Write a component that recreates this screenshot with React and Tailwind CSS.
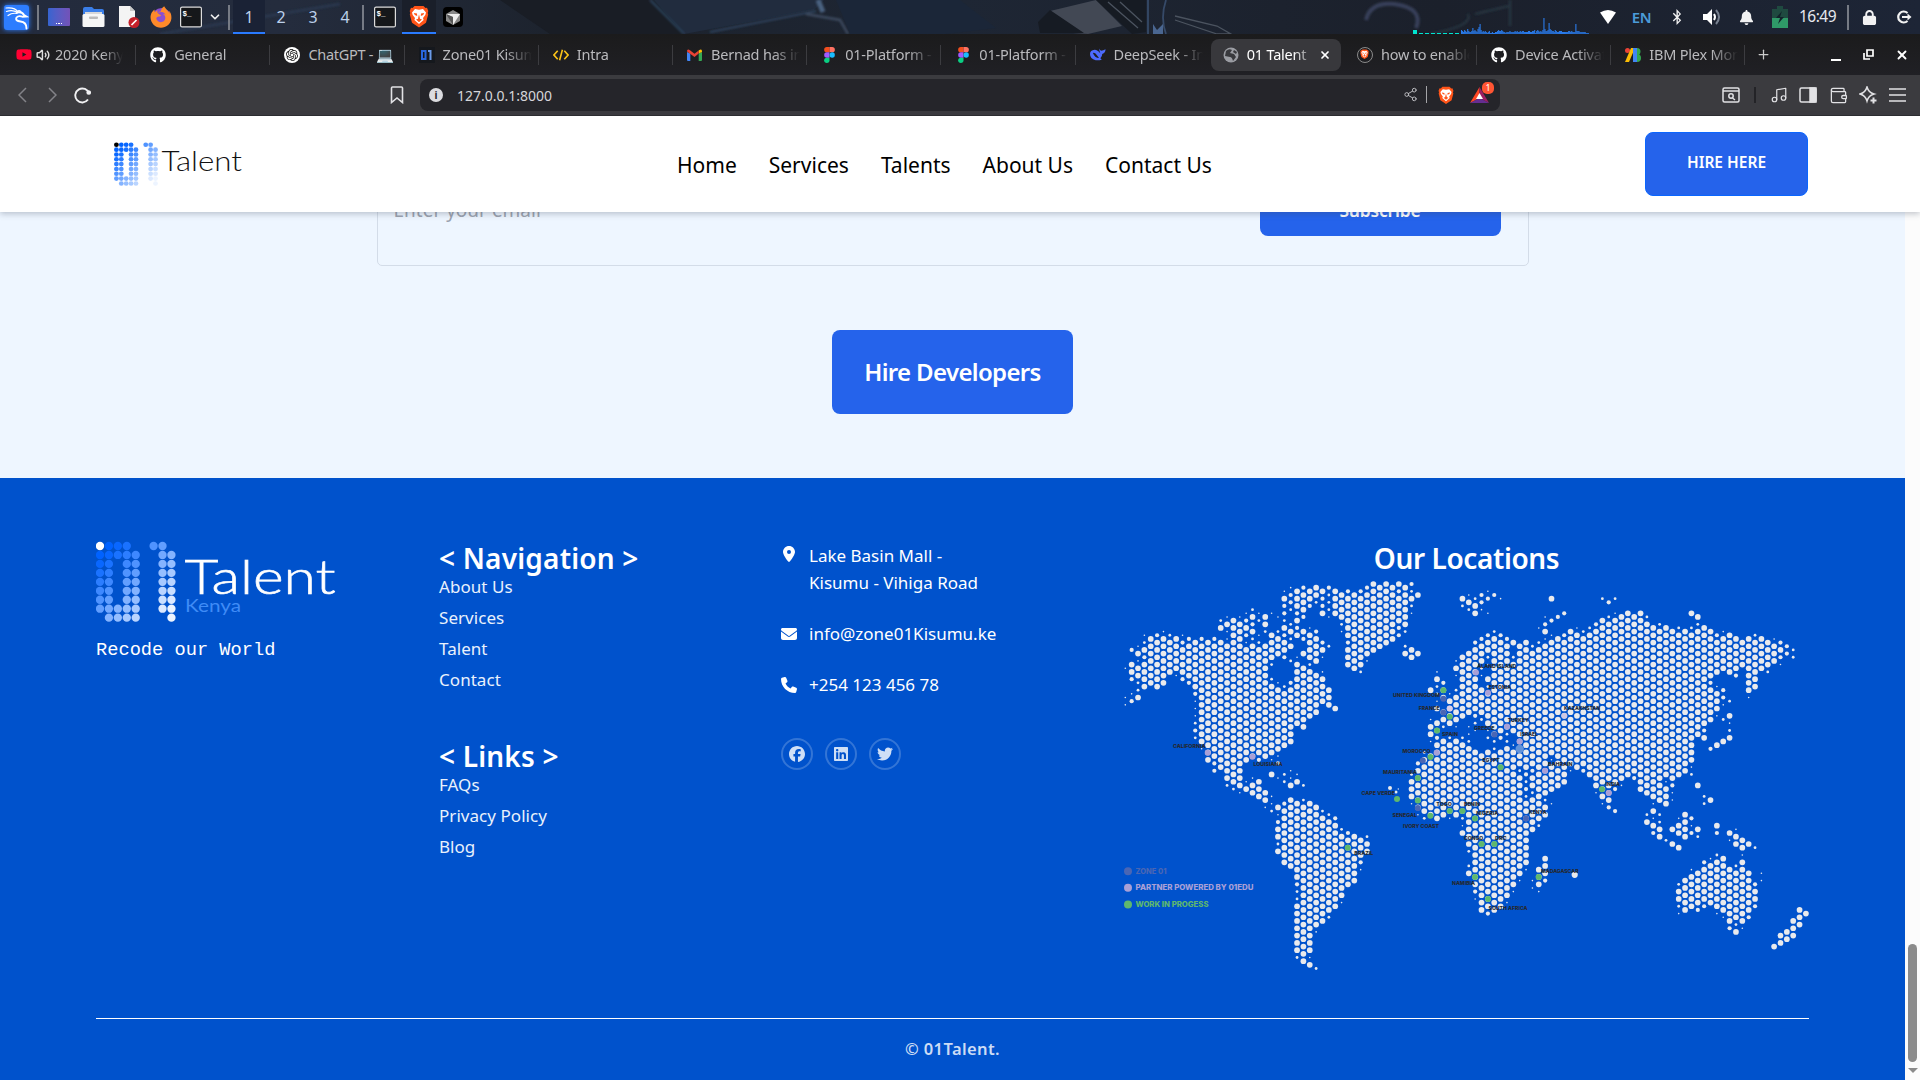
import React from "react";
import { FaGithub, FaYoutube, FaLocationDot, FaEnvelope, FaPhone, FaFacebook, FaLinkedin, FaTwitter, FaLock, FaBell, FaBluetoothB, FaFirefoxBrowser } from "react-icons/fa6";
import { SiOpenai } from "react-icons/si";
import { Volume2, ChevronDown, Share2, Music, Wallet, X, Plus } from "lucide-react";

/* ---------- Dotted world map ---------- */
// One entry per column: "a-b" is a run of full dots, a suffix m/s/t marks smaller dots.
const COLUMNS = [
  "325t 413t 435t",
  "270m 314 336 358m 402t 424m",
  "259t 281 303t 325 347 369s 391s 413",
  "226t 248s 270 292m 314-380",
  "237-369",
  "226m 248-380",
  "215t 237-369",
  "226s 248-336",
  "237-325 347t",
  "226t 248m 270-336 358m",
  "237m 259-347 369m",
  "248-380 402m 424t 446t 468t 490s 512m 534s",
  "237m 259-545 567t",
  "248-600",
  "237m 259-589 611m 633m",
  "182s 204 248-622",
  "171t 193 215t 237t 259-655 677s",
  "182-666 688s",
  "171t 193-677 699t",
  "160t 182m 204 226m 248t 270-600 666t 688",
  "149s 171 193m 215 237s 259-589 655t 677 699",
  "160t 182s 226t 248s 270-578 600m 666 688 710",
  "171 193 215s 259-589 699 721 742t",
  "160t 226-292 314s 358s 380-578 600t 644 710t 732t 754s",
  "171t 215s 237-281 369t 391-567 589t 611m 655t 743 765t 787m 808 830 852s 874",
  "94t 116 138m 160m 182s 204 226m 248 270 292m 380s 402-556 644s 666s 732m 754-908",
  "83t 105m 127m 149s 193s 215 237s 259 303s 369m 391-545 633t 655t 677 721-919",
  "94-138 160m 182 204m 226 292t 314-490 644t 666 732-951 973m 995s 1017s 1039-1171 1193s",
  "83m 105-149 171m 215 237m 281 325-501 677s 721s 743-1205",
  "94 116 138m 204t 226-292 314s 336-468 732-1171 1193t 1215",
  "83 105 127s 215m 237-303 347-457 743-1094 1116t 1226s",
  "94 116m 138m 160 248m 270 292t 336t 358-424 754s 775-1083",
  "83m 105s 127s 149s 171t 259s 391-435 765s 787-1050 1072s",
  "94-160 446 775m 797-1039",
  "105-171 193s 215t 808s 830-1006 1028t",
  "94m 116-226 248m 270-314 819m 841-973",
  "105-325 830-962",
  "94m 116-314 336s 841-885 907m 929t",
  "83m 105-281 303t 830s 852 874",
  "72-270",
  "83-259",
  "72-248",
  "83-237",
  "72 94m 116-182 204m 226m",
  "83-193 215s 259s 281",
  "72m 94s 116 138s 160t 270 292 644s 666 688 710 732t",
  "105 281 611m 633-743 765t",
  "578s 600-754 775s",
  "391 479t 501 523 545t 589-765",
  "336t 358 380s 402s 424t 446 490-512 534m 556-775",
  "369m 391-413 457-479 501s 545-765",
  "402t 424-490 534s 556-753 775t",
  "303t 325 347t 391s 413-479 501t 545-765",
  "116 138s 292-468 534s 556-753 775s 797t 819",
  "105t 127 149s 281-457 501t 523t 545s 567-852 874s 918s 940",
  "116s 138 160 248m 270-446 468m 490s 512t 578-973 995m 1017t",
  "105m 127m 149t 237m 259-303 325s 347t 391-457 479s 589-1050",
  "94t 116m 160t 226m 248 270 292s 314t 358 380s 402-490 512t 534s 578-1039 1061m",
  "105m 215s 237-523 545s 567s 589-1050",
  "116t 226m 248-512 534m 578-1039",
  "237m 259-501 523s 545s 567-1006 1028t",
  "248 292s 314-512 556t 578-973 995t",
  "259-567 589-611 633s 655-940 962t",
  "248-622 644m 666s 688m 710s 732-907 929t",
  "259s 281-611 633m 655-677 699s 721-808 962t 984t",
  "204t 248s 270-775 797s 929-973 995t",
  "171t 193m 215 237t 259-699 721s 743-765 896-940 962m",
  "116 182m 226t 248-578 600t 622-687 732t",
  "171m 237-677",
  "160m 226m 248-666",
  "215-611 633t",
  "204t 226-622",
  "215s 237-611 633m",
  "204s 226-644",
  "193m 215-677 699t",
  "116s 182-710 732t",
  "127m 171s 193-721 743m",
  "116s 160t 182-666 688m 753m",
  "171-655 677t",
  "160-644",
  "171-633 655m",
  "160-688",
  "171s 193-699 765s 787",
  "204-709 731t 753 775t 797 819m",
  "193s 215-721 765s 787s 809 830",
  "204-643 665t 687-731 841s",
  "215-655 677m 699t 721t 808 852",
  "204s 226-643 775t 797 819 863 973s 995 1017 1039s 1061t",
  "215-633 765-830 962-1050",
  "160 204s 226-600 622t 644s 775m 797t 819m 929t 951-1039",
  "171 193s 215-523 677 808 830s 940-1028 1050m",
  "204-490 512m 534 709s 731s 907m 929-1017 1039m",
  "215-347 369m 391-479 567m 721 896t 918-1028",
  "226m 248-336 380t 402-446 468t 556 797 819m 885s 907-1039 1061t",
  "215t 237-325 391m 413m 435t 479s 545 896-1050 1072t",
  "226-336 424s 468 490t 512s 534 819 841t 929-1083 1105m",
  "237-325 347m 808t 830 852 918s 940-1072 1094s 1116",
  "248-314 841 863 885t 907-1083 1105t",
  "237-391 413t 852 940-1050 1072m",
  "226s 248-380 863s 973m 995 1017 1039m",
  "237-325 940t 962t",
  "248-314 336s",
  "237t 259-303 1160",
  "248m 270 292m 314t 1127 1149",
  "259m 281m 1116 1138",
  "270s 292s 1083 1105 1127",
  "1050 1072 1094",
  "1061",
];
const R = { m: 2.1, s: 1.4, t: 0.8 };
const DOTS = COLUMNS.flatMap((col, c) => {
  const x = 1125.3 + 6.361 * c - 1124;
  const parity = c % 2 === 0 ? 1 : 0;
  const snap = (z) => 2 * Math.round(((z - 72) / 10.986 - parity) / 2) + parity;
  return col.split(" ").flatMap((tok) => {
    const size = R[tok.slice(-1)] || 2.85;
    const [a, b] = tok.replace(/[mst]/, "").split("-").map(Number);
    const out = [];
    for (let r = snap(a); r <= snap(b || a); r += 2) out.push([x, 584 + 3.662 * r - 578, size]);
    return out;
  });
});

const GREEN = "#5fb86d", PURPLE = "#a9a0d6", NAVY = "#4a66b4";
const MARKERS = [
  [83.7, 174.7, PURPLE], [128.4, 178.7, PURPLE],
  [352, 94.6, PURPLE], [364, 114.7, PURPLE], [325.7, 130.5, "#d9cfe8"], [383, 148.6, PURPLE], [395.6, 163.6, PURPLE],
  [440.4, 137.7, "#cfc8e4"], [421, 192.7, PURPLE], [312.6, 174.8, PURPLE], [484.7, 215, PURPLE],
  [319.4, 120.7, NAVY], [319.4, 134.4, NAVY], [370.4, 156.4, NAVY], [298.8, 182.6, NAVY], [293.8, 230, NAVY], [402, 240.4, NAVY],
  [319.4, 112.3, GREEN], [325.7, 138.7, GREEN], [313, 152.5, GREEN], [306.5, 179, GREEN], [376.6, 189.3, GREEN],
  [293.8, 200, GREEN], [293.8, 222.4, GREEN], [306.3, 237.7, GREEN], [325.7, 233, GREEN], [338.4, 233, GREEN], [351, 240.4, GREEN],
  [357.6, 266, GREEN], [370.4, 266, GREEN], [351, 299, GREEN], [364, 321, GREEN], [414.6, 299, GREEN], [478, 211.3, GREEN],
  [273, 221, GREEN], [223.7, 269.7, GREEN],
];
// [label, left, baseline, width]
const LABELS = [
  ["CALIFORNIA", 49, 169.8, 32.5], ["LOUISIANA", 129.5, 188, 29], ["ÅLAND ISLAND", 353.3, 90, 39], ["ESTONIA", 364.5, 110.5, 22.5],
  ["UNITED KINGDOM", 269, 118.5, 47], ["FRANCE", 294.7, 131.6, 21], ["KAZAKHSTAN", 440, 132, 36], ["TURKEY", 383.7, 143.5, 21],
  ["GREECE", 350, 151.5, 20.5], ["SPAIN", 318, 157.8, 16], ["ISRAEL", 396.3, 158.4, 17.5], ["MOROCCO", 278.5, 175, 28],
  ["EGYPT", 358.5, 184, 17], ["BAHRAIN", 424, 188, 24.5], ["MAURITANIA", 259, 195.5, 34], ["CAPE VERDE", 237.5, 217, 33.5],
  ["TOGO", 312.3, 228.4, 15.5], ["BENIN", 340, 228, 16], ["SENEGAL", 268.5, 238.8, 24.5], ["NIGERIA", 352.3, 237, 22],
  ["KENYA", 405, 235.5, 17.5], ["IVORY COAST", 279, 250, 36], ["CONGO", 340, 262.3, 19], ["DRC", 371, 262.3, 11.5],
  ["NAMIBIA", 328, 307, 23], ["MADAGASCAR", 417, 294.6, 37.5], ["SOUTH AFRICA", 364.5, 331.5, 39], ["INDIA", 481.5, 208, 14.5], ["BRAZIL", 230.3, 277, 19],
];

function WorldMap() {
  return (
    <svg className="block h-[400px] w-[685px] overflow-visible" viewBox="0 0 685 400">
      <g fill="#e9eaed">
        {DOTS.map(([x, y, r], i) => <circle key={i} cx={x} cy={y} r={r} />)}
        <circle cx="266" cy="210" r="2" /><circle cx="272" cy="214" r="1.5" /><circle cx="274.3" cy="211" r="0.7" />
        <circle cx="450.7" cy="296.8" r="3.1" />
      </g>
      <circle cx="395.7" cy="171" r="4.2" fill="#6293da" />
      {MARKERS.map(([x, y, f], i) => <circle key={i} cx={x} cy={y} r="3" fill={f} />)}
      <g fontFamily="Inter, sans-serif" fontWeight="800" fontSize="4.9" fill="#24282f">
        {LABELS.map(([t, x, y, w]) => <text key={t} x={x} y={y} textLength={w} lengthAdjust="spacingAndGlyphs">{t}</text>)}
      </g>
      <g fontFamily="Inter, sans-serif" fontWeight="800" fontSize="7.4">
        <circle cx="4" cy="293.2" r="4" fill={NAVY} /><text x="11.5" y="295.9" textLength="31" lengthAdjust="spacingAndGlyphs" fill={NAVY}>ZONE 01</text>
        <circle cx="4" cy="309.8" r="4" fill={PURPLE} /><text x="11.5" y="312.2" textLength="118" lengthAdjust="spacingAndGlyphs" fill={PURPLE}>PARTNER POWERED BY 01EDU</text>
        <circle cx="4" cy="326.4" r="4" fill={GREEN} /><text x="11.5" y="329.3" textLength="73" lengthAdjust="spacingAndGlyphs" fill={GREEN}>WORK IN PROGESS</text>
      </g>
    </svg>
  );
}

/* ---------- 01 logo ---------- */
const ROWS = ["####..##.", "#####..##", "##.##..##", "##.##..##", "##.##..##", "##.##..##", "##.##..##", "#####..##", ".####...#"];
const LOGO = ROWS.flatMap((row, r) => [...row].flatMap((ch, c) => (ch === "#" ? [[c, r]] : [])));
function LogoDots({ x, y, dx, dy, rx, ry, first }) {
  return LOGO.map(([c, r]) => {
    const t = Math.min(0.93, Math.max(0, (c + r - 1.5) / 14.5));
    const fill = c + r === 0 ? first : `rgb(${Math.round(255 * t)},${Math.round(98 + 157 * t)},255)`;
    return <ellipse key={`${c}-${r}`} cx={x + c * dx} cy={y + r * dy} rx={rx} ry={ry} fill={fill} />;
  });
}

/* ---------- Desktop panel ---------- */
function Terminal() {
  return (
    <svg width="22" height="22" viewBox="0 0 22 22">
      <rect x="0.6" y="1.1" width="20.8" height="19.8" rx="1.5" fill="#15171a" stroke="#dcdcdc" strokeWidth="1.2" />
      <text x="2.5" y="10" fontFamily="Liberation Mono, monospace" fontWeight="700" fontSize="7.5" fill="#fff">$_</text>
    </svg>
  );
}
function Dragon() {
  return (
    <svg width="24" height="25" viewBox="0 0 24 25" fill="none" stroke="#fff" strokeLinecap="round">
      <path d="M1 3q9-1 12 4M1.500 6.500q6-2 11 1M3 10.500q4-3 9-2" strokeWidth="1.200" />
      <path d="M12 7.500q5-1 7 2.500l2.500 1.500-4 .2q-4-1.500-6 .8-1.500 3.500 4 4 6 .5 6 7" strokeWidth="1.900" />
      <path d="M13 6q2-1 3 1" strokeWidth="1.500" />
    </svg>
  );
}
function BraveIcon({ size = 20 }) {
  return (
    <svg width={size} height={size * 1.15} viewBox="0 0 20 23">
      <path d="M5.5 1h9l2 2 1.5-.2L19.3 6l-.6 2 .5 1.5-2.2 8.2L10 22.5 3 17.7.8 9.5 1.3 8 .7 6 2 2.8l1.5.2z" fill="#ff5418" />
      <path d="M6 4l4 .8L14 4l3 3.5-.7 2.5-2.3 3 .6 2-4.6 4-4.6-4 .6-2-2.3-3L3 7.500z" fill="#fff" />
      <path d="M4.800 8l3.200.6.2 2.400-2.400-1zM15.200 8l-3.200.6-.2 2.400 2.400-1zM10 9.500l1 4-1 .8-1-.8zM7 14.600l3-1 3 1-3 2.600z" fill="#ff5418" />
    </svg>
  );
}
const GRAPH = [4,3,2,4,3,2,5,3,2,2,3,6,3,4,3,2,5,7,10,4,2,3,2,3,2,1,2,3,1,1,2,1,1,2,2,3,4,3,3,4,3,2,2,1,2,2,2,3,2,2,2,2,3,2,3,2,2,3,2,3,3,2,2,2,2,3,3,2,2,3,3,4,1,3,4,3,2,3,2,4,16,5,3,3,4,11,5,4,3,3,2,4,3,2,2,3,3,3,2,2,2,2,2,2,3,3,2,3,2,2,2,10,3,3,3,2,2,2,2,2,2,1,1,1];
const Sep = () => <div className="h-[25px] w-[2px] shrink-0 bg-[#767b85]" />;
const Cell = ({ w, children, className = "" }) => (
  <div className={"flex h-full shrink-0 items-center justify-center " + w + " " + className}>{children}</div>
);

function Wallpaper() {
  return (
    <svg className="absolute inset-0 h-[34px] w-[1920px]" viewBox="0 0 1920 34">
      <defs>
        <linearGradient id="wp" x1="0" x2="1"><stop offset="0" stopColor="#232b3d" /><stop offset=".15" stopColor="#242c3d" /><stop offset=".3" stopColor="#1c222c" /><stop offset=".5" stopColor="#1e2634" /><stop offset=".75" stopColor="#1b202b" /><stop offset="1" stopColor="#1d2536" /></linearGradient>
        <filter id="soft"><feGaussianBlur stdDeviation="1.2" /></filter>
      </defs>
      <rect width="1920" height="34" fill="url(#wp)" />
      <path d="M500 0h150l36 34H550z" fill="#191d25" />
      <path d="M654 0l30 34 130-24 10-10z" fill="#212c3e" />
      <g filter="url(#soft)" fill="none">
        <path d="M650 0l34 34M710 32l106-21" stroke="#2f435d" strokeWidth="2" />
        <path d="M160 34L340 4" stroke="#2c3950" strokeWidth="2.500" />
        <path d="M818 0l5 12" stroke="#4a6280" strokeWidth="5" />
        <path d="M806 14l34 6 8 14" stroke="#3c4a5e" strokeWidth="2.500" />
        <path d="M1366 20q4-18 28-16 30 4 22 24" stroke="#38415a" strokeWidth="4" />
        <path d="M1430 34q44-8 38-20M1475 14l34-8M1510 0v26" stroke="#26343f" strokeWidth="2.500" />
      </g>
      <path d="M960 0l36 28-50 6H850L836 0z" fill="#1b2638" />
      <path d="M1050 11l46-11 26 26-34 8-46-3z" fill="#424854" />
      <path d="M1038 22l12-12 34 23h-44zM1096 0h50v32l-14 2z" fill="#161b23" />
      <path d="M1108 2l30 26M1120 2l22 20M1175 16l42 10 14 8h-14l-42-14" stroke="#4b535f" strokeWidth="1.300" fill="none" />
      <path d="M1148 0v34M1166 0q-6 18 0 34" stroke="#364a68" strokeWidth="1.800" fill="none" />
      <path d="M1153 24l4 6 6-6v10h-10z" fill="#4a6690" />
      <g fill="#00e5d0"><rect x="1413" y="30" width="4" height="4" />{[0,1,2,3,4,5,6].map((i) => <rect key={i} x={1419 + i * 6} y="33" width="4" height="1" />)}</g>
      <g fill="#2a7bea">{GRAPH.map((h, i) => <rect key={i} x={1461 + i * 1.030} y={34 - h} width="1.100" height={h} />)}</g>
    </svg>
  );
}

function Panel() {
  return (
    <div className="relative h-[34px] overflow-hidden">
      <Wallpaper />
      <div className="relative flex h-full items-center font-['Noto_Sans',sans-serif] text-[16px] text-[#bcd0ea]">
        <Cell w="w-[37px]" className="pr-1"><div className="flex size-[25px] items-center justify-center rounded-[3px] bg-[#2d7dff] shadow-[0_0_5px_#2d7dff]"><Dragon /></div></Cell>
        <Sep />
        <Cell w="w-[40px]"><div className="flex h-[18px] w-[22px] items-end justify-center gap-[1px] rounded-[1px] bg-gradient-to-r from-[#3564d0] to-[#7352b8] pb-[2px]"><i className="h-[1.5px] w-[1.5px] bg-white" /><i className="h-[1.5px] w-[1.5px] bg-white" /><i className="h-[1.5px] w-[1.5px] bg-white" /></div></Cell>
        <Cell w="w-[28px]"><svg width="23" height="22" viewBox="0 0 23 22"><path d="M1 9V3q0-2 2-2h7l2 2h8q2 0 2 2v5z" fill="#3a7ee8" /><path d="M3 6h17v6H3z" fill="#d8d8d8" /><rect x="0.500" y="8" width="22" height="13" rx="1.500" fill="#f6f6f6" /><rect x="7" y="10.500" width="9" height="2.500" rx="1" fill="#bbb" /></svg></Cell>
        <Cell w="w-[42px]"><svg width="23" height="22" viewBox="0 0 23 22"><path d="M2 0h11l5 5v16H2z" fill="#f4f4f4" /><path d="M13 0v5h5z" fill="#c9c9c9" /><circle cx="17" cy="16.500" r="5.500" fill="#c5202a" /><path d="M14.500 19l5-5" stroke="#fff" strokeWidth="1.700" /></svg></Cell>
        <Cell w="w-[24px]"><div className="flex size-[19px] items-center justify-center rounded-full bg-[#8a4fd0]"><FaFirefoxBrowser size={22} color="#ff8a2a" className="shrink-0" /></div></Cell>
        <Cell w="w-[34px]" className="pl-[2px]"><Terminal /></Cell>
        <Cell w="w-[26px]" className="pr-[11px]"><ChevronDown size={14} strokeWidth={3} color="#eee" /></Cell>
        <div className="mr-[3px] -ml-[5px]"><Sep /></div>
        <Cell w="w-[32px]" className="border-b-2 border-[#2a7bff] bg-[#1a2235] pt-[2px]">1</Cell>
        <Cell w="w-[32px]">2</Cell><Cell w="w-[32px]">3</Cell><Cell w="w-[32px]">4</Cell>
        <div className="ml-px"><Sep /></div>
        <Cell w="w-[38px]" className="pl-[4px]"><Terminal /></Cell>
        <Cell w="w-[34px]" className="border-b-2 border-[#2a7bff] bg-[#1a1f2a]"><BraveIcon size={20} /></Cell>
        <Cell w="w-[34px]"><div className="flex size-[20px] items-center justify-center rounded-[4px] bg-black"><svg width="14" height="15" viewBox="0 0 14 15"><path d="M7 0l7 4v7l-7 4-7-4V4z" fill="#888" /><path d="M0 4h14L7 15V7z" fill="#eee" /><path d="M0 4l7 3v8z" fill="#555" /></svg></div></Cell>
        <div className="grow" />
        <Cell w="w-[32px]"><svg width="16" height="14" viewBox="0 0 16 14"><path d="M0 2.500Q8-2.500 16 2.500L8 14z" fill="#fff" /></svg></Cell>
        <Cell w="w-[35px]" className="text-[15px] font-semibold tracking-[-0.3px] text-[#4b9bd8]">EN</Cell>
        <Cell w="w-[35px]"><FaBluetoothB size={16} color="#f2f2f2" /></Cell>
        <Cell w="w-[35px]"><svg width="18" height="16" viewBox="0 0 18 16"><path d="M0 5h4l5-5v16l-5-5H0z" fill="#fff" /><path d="M11 5q2 3 0 6" stroke="#fff" strokeWidth="2" fill="none" /><path d="M13 1q6 7 0 14" stroke="#77808f" strokeWidth="2" fill="none" /></svg></Cell>
        <Cell w="w-[34px]"><FaBell size={15} color="#f2f2f2" /></Cell>
        <Cell w="w-[34px]"><svg width="16" height="22" viewBox="0 0 16 22"><path d="M5 0h6v3h5v10H0V3h5z" fill="#1f4a40" /><path d="M0 12h16v10H0z" fill="#2f9a68" /><path d="M10 5l-6 7h4l-2 6 6-7H8z" fill="#12222a" /></svg></Cell>
        <Cell w="w-[50px]" className="pr-[9px] text-[15.500px] tracking-[-0.5px] text-[#e6e9ef]">16:49</Cell>
        <Sep />
        <Cell w="w-[40px]"><FaLock size={15} color="#f2f2f2" /></Cell>
        <Cell w="w-[31px]" className="pr-[2px]"><svg width="16" height="14" viewBox="0 0 16 14" fill="none" stroke="#f2f2f2" strokeWidth="2.200"><path d="M11.500 3A5.500 5.500 0 1 0 11.500 11M6 7h7" /><path d="M11.500 3.500L15.500 7l-4 3.500z" fill="#f2f2f2" stroke="none" /></svg></Cell>
      </div>
    </div>
  );
}

/* ---------- Browser chrome ---------- */
const Figma = () => (
  <svg width="11" height="16" viewBox="0 0 12 18"><path d="M3 0h3v6H3a3 3 0 0 1 0-6z" fill="#f24e1e" /><path d="M6 0h3a3 3 0 0 1 0 6H6z" fill="#ff7262" /><path d="M3 6h3v6H3a3 3 0 0 1 0-6z" fill="#a259ff" /><circle cx="9" cy="9" r="3" fill="#1abcfe" /><path d="M3 12h3v3a3 3 0 1 1-3-3z" fill="#0acf83" /></svg>
);
const Gmail = () => (
  <svg width="15" height="12" viewBox="0 0 15 12"><path d="M0 3v8q0 1 1 1h2.300V4.500z" fill="#4285f4" /><path d="M15 3v8q0 1-1 1h-2.300V4.500z" fill="#34a853" /><path d="M11.700 4.500V1.500Q15-1 15 2.500V3z" fill="#fbbc04" /><path d="M0 2.500Q0-1 3.300 1.500L7.500 4.700l4.200-3.200v3L7.500 8 0 2.500z" fill="#ea4335" /></svg>
);
const Tiny01 = () => (
  <div className="flex size-[16px] items-center justify-center bg-[#15181d]"><svg width="11" height="10" viewBox="0 0 11 10" fill="none" strokeWidth="2"><path d="M1 0v9h3.500V1H1" stroke="#2866dd" /><path d="M7 1h2.500v9" stroke="#6b9ae8" /></svg></div>
);
const TABS = [
  { t: "2020 Keny", icon: <FaYoutube size={17} color="#ff0033" />, audio: true },
  { t: "General", icon: <FaGithub size={16} color="#fff" /> },
  { t: "ChatGPT - 💻", solid: true, icon: <div className="flex size-[16px] items-center justify-center rounded-full bg-white"><SiOpenai size={12} color="#111" /></div> },
  { t: "Zone01 Kisumu", icon: <Tiny01 /> },
  { t: "Intra", icon: <svg width="17" height="12" viewBox="0 0 17 12" fill="none" stroke="#fcc419" strokeWidth="1.700"><path d="M5 1.500L1 6l4 4.500M12 1.500L16 6l-4 4.500M10 .5l-3 11" /></svg> },
  { t: "Bernad has in", icon: <Gmail /> },
  { t: "01-Platform -", icon: <Figma /> },
  { t: "01-Platform -", icon: <Figma /> },
  { t: "DeepSeek - In", icon: <svg width="17" height="13" viewBox="0 0 17 13"><path d="M0 6Q0 2 5 1.500q3 0 6 4Q10 2 9.500 0q1 2 2.500 2.500 2 0 4.500-1.500Q16.500 5 13 6q0 3-2 4.500l1.500 1.500Q9 13 6 12.500 0 11 0 6z" fill="#4d6bfe" /><path d="M3 5q2-1.500 5 3l1.500 2Q6 11 3 5z" fill="#1e1f24" /></svg> },
  { t: "01 Talent", active: true, icon: <svg width="16" height="16" viewBox="0 0 16 16"><circle cx="8" cy="8" r="7.500" fill="#9b9da3" /><path d="M3 4q3-3 6-1l-2 3 4 1 2 3-3 4q-1-4-3-4L2 9M11 3l3 2-1 2-3-2z" fill="#38393d" /></svg> },
  { t: "how to enable", icon: <div className="flex size-[16px] items-center justify-center rounded-full border border-[#8a8a8a]"><BraveIcon size={9} /></div> },
  { t: "Device Activat", icon: <FaGithub size={16} color="#fff" /> },
  { t: "IBM Plex Mono", icon: <svg width="16" height="14" viewBox="0 0 16 14"><circle cx="2.500" cy="2.500" r="2.500" fill="#ea4335" /><path d="M6 0h4L4 14H0z" fill="#fbbc04" /><path d="M8 0h4v14H8z" fill="#4285f4" /><path d="M12 0a3.500 3.500 0 0 1 0 7zM12 6a4 4 0 0 1 0 8z" fill="#34a853" /></svg> },
];

function TabStrip() {
  return (
    <div className="flex h-[41px] items-center bg-gradient-to-b from-[#1b1b1c] to-[#202025] font-['Noto_Sans',sans-serif] text-[14.500px] text-[#bababd]">
      <div className="w-[2px]" />
      {TABS.map((tab, i) =>
        tab.active ? (
          <div key={i} className="flex h-[32px] w-[134.200px] shrink-0 items-center pl-[2px]">
            <div className="flex h-full w-[130px] items-center rounded-lg bg-[#38383c] pl-[12px] text-white">
              <div className="flex w-[16px] justify-center">{tab.icon}</div>
              <div className="ml-2 w-[62px] overflow-hidden whitespace-nowrap tracking-[-0.2px] [mask-image:linear-gradient(to_right,black_75%,#0005)]">{tab.t}</div>
              <X size={12} strokeWidth={3.5} className="ml-[10px]" />
            </div>
          </div>
        ) : (
          <div key={i} className={"flex h-[20px] w-[134.200px] shrink-0 items-center border-l pl-[14px] " + (i === 0 || i === 10 ? "border-transparent -ml-px pr-px" : "border-[#3c3c40]")}>
            <div className="flex w-[16px] shrink-0 justify-center">{tab.icon}</div>
            {tab.audio && <Volume2 size={14} strokeWidth={2.500} color="#ddd" className="ml-[4px] shrink-0" />}
            <div className={"overflow-hidden whitespace-nowrap tracking-[-0.2px] " + (tab.solid ? "tracking-[-0.3px] " : "[mask-image:linear-gradient(to_right,black_70%,transparent)] ") + (tab.audio ? "ml-[5px] w-[68px]" : "ml-2 w-[89px]")}>{tab.t}</div>
          </div>
        )
      )}
      <div className="h-[20px] w-px bg-[#3c3c40]" />
      <Plus size={15} className="ml-[11px]" color="#ccc" />
      <div className="ml-auto flex items-center pr-[11px]">
        <div className="mt-[10px] h-[2px] w-[10px] bg-white" />
        <svg width="11" height="11" viewBox="0 0 11 11" className="ml-[22px]" fill="none" stroke="#fff" strokeWidth="1.700"><path d="M4 1h6v6H4zM1 4v6h6" /></svg>
        <X size={14} strokeWidth={3.200} color="#fff" className="ml-[21px]" />
      </div>
    </div>
  );
}

function Toolbar() {
  return (
    <div className="flex h-[41px] items-center border-b border-[#2c2c2f] bg-[#3b3b3f] font-['Noto_Sans',sans-serif] text-[#d6d6d9]">
      <Cell w="w-[44px]"><svg width="9" height="16" viewBox="0 0 9 16" fill="none" stroke="#838388" strokeWidth="1.500"><path d="M8 1L1 8l7 7" /></svg></Cell>
      <Cell w="w-[16px]"><svg width="9" height="16" viewBox="0 0 9 16" fill="none" stroke="#838388" strokeWidth="1.500"><path d="M1 1l7 7-7 7" /></svg></Cell>
      <Cell w="w-[44px]"><svg width="17" height="17" viewBox="0 0 17 17" fill="none" stroke="#f0f0f2" strokeWidth="1.900"><path d="M15 6.500A7 7 0 1 0 14 12.500" /><circle cx="14.700" cy="5.500" r="1.400" fill="#f0f0f2" /></svg></Cell>
      <div className="w-[286px]" />
      <svg width="14" height="18" viewBox="0 0 14 18" fill="none" stroke="#e2e2e5" strokeWidth="1.600"><path d="M2.500 1h9q1 0 1 1v14.500L7 12l-5.500 4.500V2q0-1 1-1z" /></svg>
      <div className="ml-[16px] flex h-[32px] w-[1080px] items-center rounded-lg bg-[#25252a] pl-[9px] text-[14px]">
        <div className="flex size-[14px] items-center justify-center rounded-full bg-[#dcdce0] text-[10px] font-bold text-[#25252a]">i</div>
        <span className="ml-[14px]">127.0.0.1:8000</span>
        <div className="ml-auto flex items-center">
          <Share2 size={15} strokeWidth={1.600} color="#b8b8bc" />
          <div className="ml-[8px] h-[17px] w-px bg-[#a5a5a8]" />
          <div className="ml-[11px]"><BraveIcon size={16} /></div>
          <div className="relative mr-[11px] ml-[16px]">
            <svg width="19" height="16" viewBox="0 0 19 16"><path d="M9.500 0L0 16l9.500-5z" fill="#ff4724" /><path d="M9.500 0L19 16l-9.500-5z" fill="#9e1f63" /><path d="M0 16h19l-9.500-5z" fill="#662d91" /><path d="M9.500 6l3.500 6H6z" fill="#fff" /></svg>
            <span className="absolute -top-[5px] left-[12px] flex size-[12px] items-center justify-center rounded-[5px] bg-[#ff5533] text-[9px] text-white">1</span>
          </div>
        </div>
      </div>
      <div className="ml-auto flex items-center text-[#e2e2e5]">
        <svg width="18" height="16" viewBox="0 0 18 16" fill="none" stroke="currentColor" strokeWidth="1.500"><rect x="1" y="1" width="16" height="14" rx="1.500" /><path d="M1 4h16M10.500 11l2.500 2" /><circle cx="9" cy="9" r="2.200" /></svg>
        <div className="mx-[14px] h-[16px] w-[2px] bg-[#232327]" />
        <Music size={18} strokeWidth={1.600} className="mr-[11px]" />
        <svg width="18" height="16" viewBox="0 0 18 16" fill="none" stroke="currentColor" strokeWidth="1.500" className="mr-[12px]"><rect x="1" y="1" width="16" height="14" rx="1.500" /><path d="M11 1h6v14h-6z" fill="currentColor" /></svg>
        <Wallet size={19} strokeWidth={1.600} className="mr-[11px]" />
        <svg width="18" height="18" viewBox="0 0 18 18" fill="none" stroke="currentColor" strokeWidth="1.500" className="mr-[12px]"><path d="M8 1q1.500 5.500 7 7-5.500 1.500-7 7-1.500-5.500-7-7 5.500-1.500 7-7z" /><path d="M14.500 11.500v6M11.500 14.500h6" strokeWidth="2" /></svg>
        <svg width="17" height="14" viewBox="0 0 17 14" stroke="currentColor" strokeWidth="1.600" className="mr-[14px]"><path d="M0 1h17M0 7h17M0 13h17" /></svg>
      </div>
    </div>
  );
}

/* ---------- Page ---------- */
function Header() {
  return (
    <header className="relative z-10 flex h-[96px] w-[1920px] items-center bg-white shadow-[0_2px_6px_rgba(60,70,90,0.3)]">
      <svg className="ml-[112px] block h-[50px] w-[140px]" viewBox="112 139 140 50">
        <LogoDots x={116.4} y={144.800} dx={4.890} dy={4.830} rx={2.400} ry={2.300} first="#000" />
        <text x="161.500" y="171" fontFamily="Lato, sans-serif" fontSize="27" fontWeight="300" textLength="80.500" lengthAdjust="spacingAndGlyphs" fill="#111">Talent</text>
      </svg>
      <nav className="ml-[425px] flex gap-8 pt-[3px] font-['Noto_Sans',sans-serif] text-[21px] text-black">
        <a>Home</a><a>Services</a><a>Talents</a><a>About Us</a><a>Contact Us</a>
      </nav>
      <button className="mr-[112px] ml-auto h-[64px] w-[163px] rounded-lg border border-[#0a66ff] bg-[#2563eb] pb-[2px] font-['Noto_Sans',sans-serif] text-[15.500px] font-semibold text-white">HIRE HERE</button>
    </header>
  );
}

const LogoFooter = () => (
  <svg className="block h-[84px] w-[245px]" viewBox="96 540 245 84">
    <LogoDots x={100} y={546} dx={8.930} dy={8.960} rx={4.150} ry={4.150} first="#fff" />
    <text x="184.500" y="594" fontFamily="Lato, sans-serif" fontSize="48" fontWeight="300" textLength="151" lengthAdjust="spacingAndGlyphs" fill="#fff" stroke="#fff" strokeWidth="0.600">Talent</text>
    <text x="185" y="612" fontFamily="Lato, sans-serif" fontSize="17" textLength="56" lengthAdjust="spacingAndGlyphs" fill="#3f8bf6">Kenya</text>
  </svg>
);

function LinkList({ title, items }) {
  return (
    <div>
      <h3 className="h-[32px] text-[28px] leading-[32px] font-semibold tracking-[0.2px] whitespace-nowrap">{title}</h3>
      <ul className="mt-[-3px] text-[17px] leading-[31px] tracking-[0.05px] text-[#e9f1fc]">{items.map((t) => <li key={t}>{t}</li>)}</ul>
    </div>
  );
}

function Social({ children }) {
  return <div className="flex size-[32px] items-center justify-center rounded-full border-2 border-[#3375d6] text-[#cfdff6]">{children}</div>;
}

function Footer() {
  return (
    <footer className="h-[602px] bg-[#0052cc] px-[96px] pt-[62px] text-white">
      <div className="flex h-[477px]">
        <div className="w-[342px]">
          <LogoFooter />
          <p className="mt-[14px] font-['Liberation_Mono',monospace] text-[18.700px] leading-[24px]">Recode our World</p>
        </div>
        <div className="flex w-[343px] flex-col gap-[45px] pt-[2px] pl-px">
          <LinkList title="< Navigation >" items={["About Us", "Services", "Talent", "Contact"]} />
          <LinkList title="< Links >" items={["FAQs", "Privacy Policy", "Blog"]} />
        </div>
        <div className="w-[343px] pt-[2px] text-[17px] leading-[27px]">
          <div className="flex gap-[12px]"><FaLocationDot size={16} className="mt-[4px]" /><p>Lake Basin Mall -<br />Kisumu - Vihiga Road</p></div>
          <div className="mt-[24px] flex items-center gap-[12px]"><FaEnvelope size={16} /><p>info@zone01Kisumu.ke</p></div>
          <div className="mt-[24px] flex items-center gap-[12px]"><FaPhone size={16} /><p>+254 123 456 78</p></div>
          <div className="mt-[40px] flex gap-[12px]">
            <Social><FaFacebook size={16} /></Social><Social><FaLinkedin size={16} /></Social><Social><FaTwitter size={16} /></Social>
          </div>
        </div>
        <div className="w-[685px]">
          <h3 className="h-[38px] text-center text-[28px] leading-[36px] font-semibold tracking-[-0.4px]">Our Locations</h3>
          <WorldMap />
        </div>
      </div>
      <div className="mt-px border-t border-white pt-[18px] text-center text-[16.500px] leading-[24px] font-semibold tracking-[0.4px] text-[#ccdcf5]">© 01Talent.</div>
    </footer>
  );
}

export default function App() {
  return (
    <div className="h-[1080px] w-[1920px] overflow-hidden bg-white">
      <Panel />
      <TabStrip />
      <Toolbar />
      <Header />
      <div className="flex h-[868px] font-['Noto_Sans',sans-serif]">
        <div className="w-[1905px]">
          <section className="flex h-[266px] flex-col items-center bg-[#eef6ff]">
            <div className="-mt-[60px] flex h-[114px] w-[1152px] shrink-0 justify-between rounded-b-[5px] border border-[#d3dce8] pr-[27px] pl-[16px]">
              <span className="mt-[44px] text-[19px] leading-[26px] text-[#9ca3af]">Enter your email</span>
              <div className="flex h-[83px] w-[241px] items-end justify-center rounded-lg bg-[#2563eb] pb-[12px] text-[17.500px] leading-[28px] font-semibold tracking-[-0.2px] text-white">Subscribe</div>
            </div>
            <button className="mt-[64px] h-[84px] w-[241px] shrink-0 rounded-lg bg-[#2563eb] text-[24px] font-semibold tracking-[-0.650px] text-white">Hire Developers</button>
          </section>
          <Footer />
        </div>
        <div className="flex w-[15px] flex-col items-center bg-[#fcfcfc]">
          <div className="mt-[732px] h-[118px] w-[9px] rounded-full bg-[#8b8b8b]" />
          <div className="mt-[6px] h-0 w-0 border-x-[5px] border-t-[5px] border-x-transparent border-t-[#8b8b8b]" />
        </div>
      </div>
    </div>
  );
}
